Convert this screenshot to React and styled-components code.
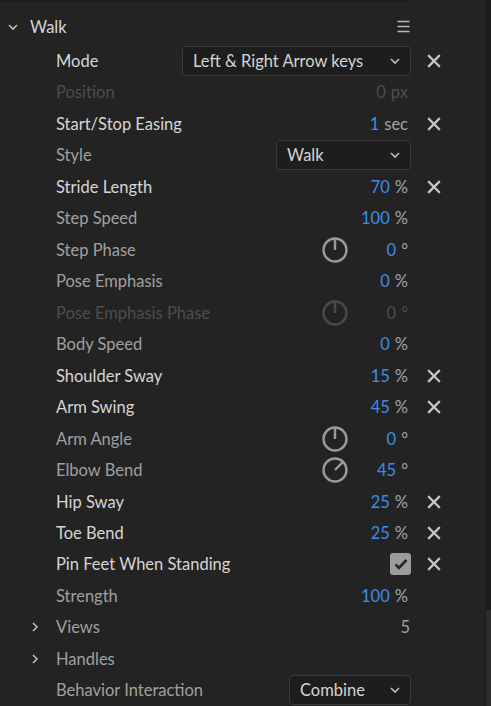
import React from "react"
import styled, { createGlobalStyle } from "styled-components"

const GlobalStyle = createGlobalStyle`
  html, body {
    margin: 0;
    padding: 0;
    background: #232323;
  }
  body {
    font-family: Lato, "Open Sans", sans-serif;
    -webkit-font-smoothing: antialiased;
  }
`

const tones = {
  bright: "#d6d6d6",
  normal: "#a0a0a0",
  dim: "#4e4e4e",
}

const Screen = styled.div`
  display: flex;
  width: 491px;
  height: 706px;
  overflow: hidden;
  background: #232323;
`

const Panel = styled.div`
  flex: 1;
  display: flex;
  flex-direction: column;
`

const TopEdge = styled.div`
  width: 410px;
  height: 2px;
  background: #1c1c1c;
  flex-shrink: 0;
`

const Scrollbar = styled.div`
  width: 6px;
  display: flex;
  flex-direction: column;
  background: #1d1d1d;
`

const ScrollThumb = styled.div`
  margin-top: auto;
  height: 96px;
  background: #2d2d2d;
  border-left: 1px solid #191919;
`

const Header = styled.div`
  display: flex;
  align-items: center;
  height: 32px;
  margin-top: 9px;
  margin-bottom: 2px;
  padding-left: 7px;
  padding-right: 75px;
`

const HeaderTitle = styled.span`
  margin-left: 11px;
  font-size: 16.5px;
  color: #d8d8d8;
  flex: 1;
`

const Row = styled.div`
  display: flex;
  align-items: center;
  height: 31.5px;
  padding-left: ${p => (p.group ? "29px" : "56px")};
  padding-right: 27px;
`

const Label = styled.span`
  font-size: 16.5px;
  color: ${p => tones[p.tone]};
  white-space: nowrap;
  flex: 1;
`

const GroupChevron = styled.svg`
  width: 12px;
  height: 12px;
  margin-right: 15px;
  flex-shrink: 0;
`

const Controls = styled.div`
  display: flex;
  align-items: center;
  justify-content: flex-end;
`

const Value = styled.span`
  font-size: 16.5px;
  white-space: nowrap;
  text-align: right;
  min-width: ${p => (p.wide ? "59px" : "0")};
  margin-right: ${p => (p.plain ? "0" : "2px")};
`

const Num = styled.span`
  color: ${p => (p.dim ? tones.dim : p.plain ? tones.normal : "#3f8de6")};
`

const Unit = styled.span`
  margin-left: 5px;
  color: ${p => (p.dim ? tones.dim : "#a4a4a4")};
`

const Select = styled.div`
  display: flex;
  align-items: center;
  width: ${p => p.w}px;
  height: 30px;
  box-sizing: border-box;
  padding: 0 9px 0 10px;
  background: #1d1d1d;
  border: 1px solid #3a3a3a;
  border-radius: 4px;
  font-size: 16.5px;
  color: #d4d4d4;
  margin-right: -1px;
`

const SelectText = styled.span`
  flex: 1;
  white-space: nowrap;
`

const Reset = styled.div`
  width: 48px;
  display: flex;
  justify-content: center;
  align-items: center;
`

const Checkbox = styled.div`
  width: 21px;
  height: 22px;
  border-radius: 3px;
  background: #9c9c9c;
  display: flex;
  align-items: center;
  justify-content: center;
  margin-right: -1px;
`

const DialSvg = styled.svg`
  width: 28px;
  height: 28px;
  flex-shrink: 0;
`

const Chevron = ({ color = "#bdbdbd" }) => (
  <svg width="12" height="12" viewBox="0 0 12 12">
    <path d="M2 4 L6 8 L10 4" fill="none" stroke={color} strokeWidth="1.6" />
  </svg>
)

const CloseIcon = () => (
  <svg width="14" height="14" viewBox="0 0 14 14">
    <path
      d="M2 2 L12 12 M12 2 L2 12"
      stroke="#c6c6c6"
      strokeWidth="2.3"
      strokeLinecap="square"
    />
  </svg>
)

const Dial = ({ angle, dim }) => {
  const rad = (angle * Math.PI) / 180
  const x = 14 + Math.sin(rad) * 11
  const y = 14 - Math.cos(rad) * 11
  const c = dim ? "#4a4a4a" : "#9a9a9a"
  return (
    <DialSvg viewBox="0 0 28 28">
      <circle cx="14" cy="14" r="11.5" fill="none" stroke={c} strokeWidth="2.4" />
      <line x1="14" y1="14" x2={x} y2={y} stroke={c} strokeWidth="2.4" />
    </DialSvg>
  )
}

const rows = [
  { label: "Mode", tone: "bright", select: "Left & Right Arrow keys", w: 229, reset: true },
  { label: "Position", tone: "dim", num: "0", unit: "px", dim: true },
  { label: "Start/Stop Easing", tone: "bright", num: "1", unit: "sec", reset: true },
  { label: "Style", tone: "normal", select: "Walk", w: 135 },
  { label: "Stride Length", tone: "bright", num: "70", unit: "%", reset: true },
  { label: "Step Speed", tone: "normal", num: "100", unit: "%" },
  { label: "Step Phase", tone: "normal", dial: 0, num: "0", unit: "°" },
  { label: "Pose Emphasis", tone: "normal", num: "0", unit: "%" },
  { label: "Pose Emphasis Phase", tone: "dim", dial: 0, num: "0", unit: "°", dim: true },
  { label: "Body Speed", tone: "normal", num: "0", unit: "%" },
  { label: "Shoulder Sway", tone: "bright", num: "15", unit: "%", reset: true },
  { label: "Arm Swing", tone: "bright", num: "45", unit: "%", reset: true },
  { label: "Arm Angle", tone: "normal", dial: 0, num: "0", unit: "°" },
  { label: "Elbow Bend", tone: "normal", dial: 45, num: "45", unit: "°" },
  { label: "Hip Sway", tone: "bright", num: "25", unit: "%", reset: true },
  { label: "Toe Bend", tone: "bright", num: "25", unit: "%", reset: true },
  { label: "Pin Feet When Standing", tone: "bright", checkbox: true, reset: true },
  { label: "Strength", tone: "normal", num: "100", unit: "%" },
  { label: "Views", tone: "normal", group: true, num: "5", plain: true },
  { label: "Handles", tone: "normal", group: true },
  { label: "Behavior Interaction", tone: "normal", select: "Combine", w: 122 },
]

const PropertyRow = ({ r }) => (
  <Row group={r.group}>
    {r.group && (
      <GroupChevron viewBox="0 0 12 12">
        <path d="M4 2 L8 6 L4 10" fill="none" stroke="#bdbdbd" strokeWidth="1.6" />
      </GroupChevron>
    )}
    <Label tone={r.tone}>{r.label}</Label>
    <Controls>
      {r.select && (
        <Select w={r.w}>
          <SelectText>{r.select}</SelectText>
          <Chevron />
        </Select>
      )}
      {r.dial !== undefined && <Dial angle={r.dial} dim={r.dim} />}
      {r.num && (
        <Value wide={r.dial !== undefined} plain={r.plain}>
          <Num dim={r.dim} plain={r.plain}>
            {r.num}
          </Num>
          {r.unit && <Unit dim={r.dim}>{r.unit}</Unit>}
        </Value>
      )}
      {r.checkbox && (
        <Checkbox>
          <svg width="14" height="12" viewBox="0 0 14 12">
            <path d="M1.5 6.5 L5 10 L12.5 2" fill="none" stroke="#262626" strokeWidth="2.6" />
          </svg>
        </Checkbox>
      )}
    </Controls>
    <Reset>{r.reset && <CloseIcon />}</Reset>
  </Row>
)

export default function App() {
  return (
    <Screen>
      <GlobalStyle />
      <Panel>
        <TopEdge />
        <Header>
          <Chevron color="#bdbdbd" />
          <HeaderTitle>Walk</HeaderTitle>
          <svg width="13" height="13" viewBox="0 0 13 13">
            <path d="M0.5 1.5 H12.5 M0.5 6.5 H12.5 M0.5 11.5 H12.5" stroke="#b8b8b8" strokeWidth="1.4" />
          </svg>
        </Header>
        {rows.map(r => (
          <PropertyRow key={r.label} r={r} />
        ))}
      </Panel>
      <Scrollbar>
        <ScrollThumb />
      </Scrollbar>
    </Screen>
  )
}
